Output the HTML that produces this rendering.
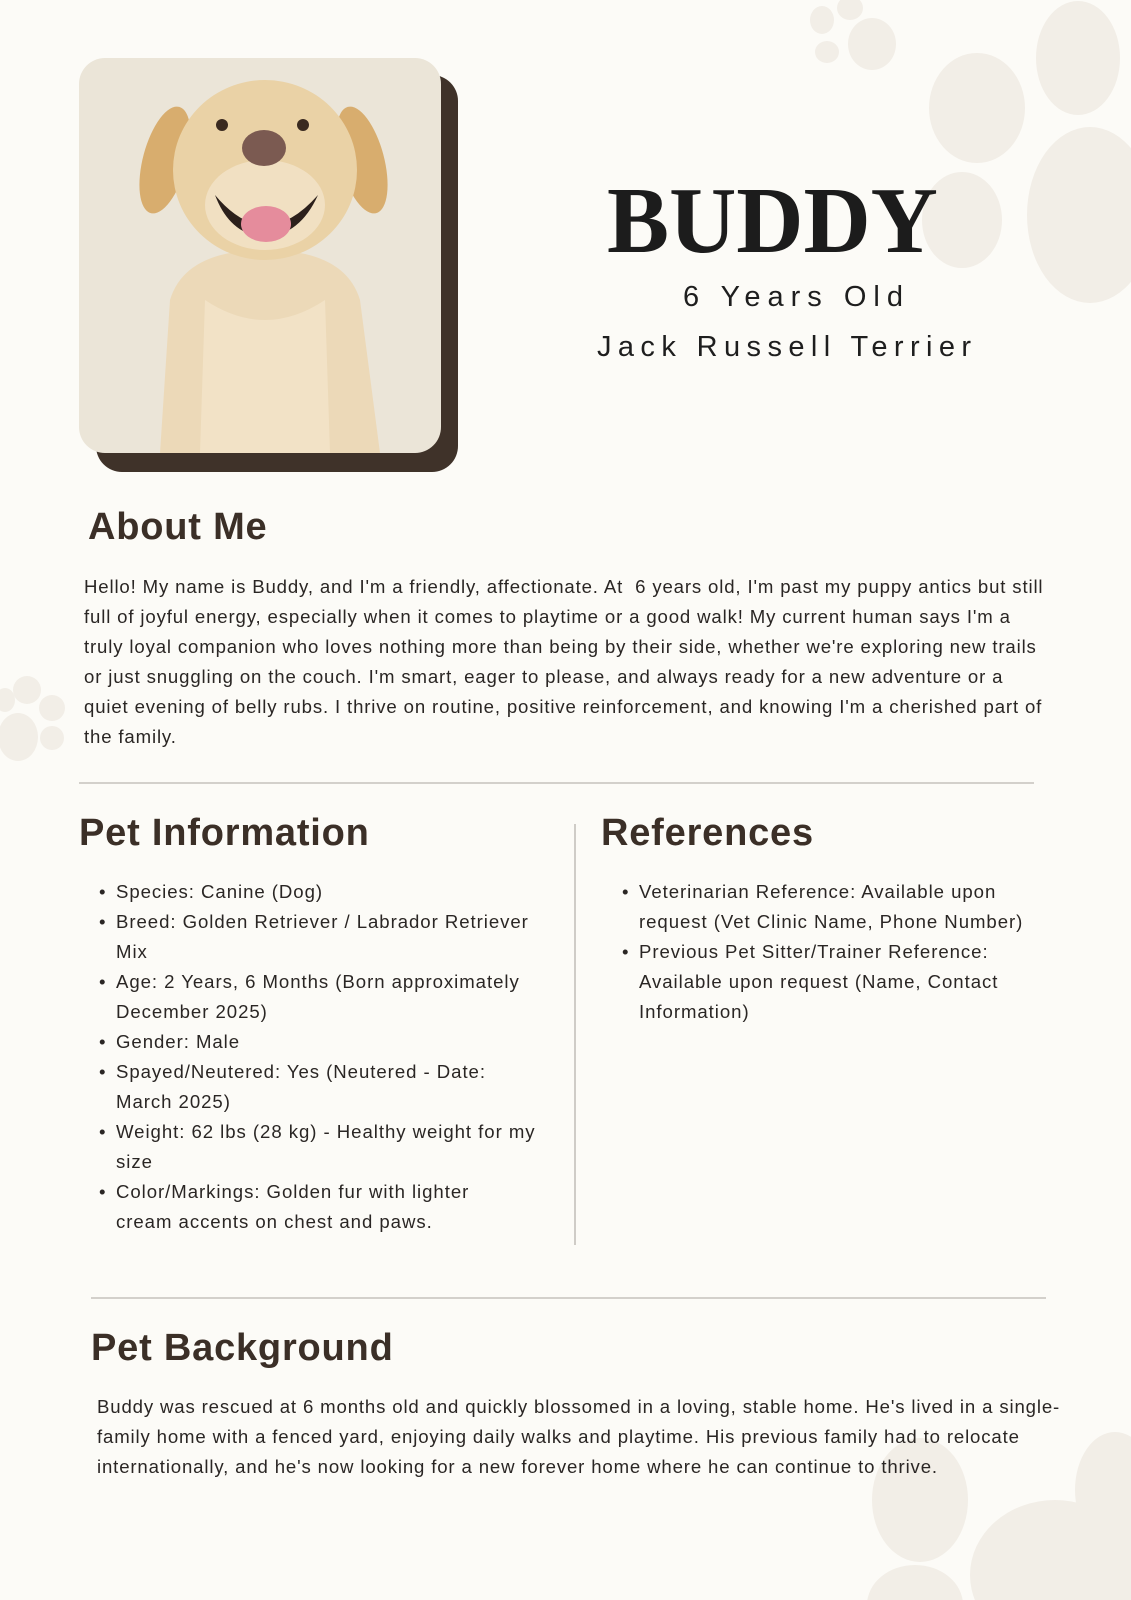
<!DOCTYPE html>
<html><head><meta charset="utf-8"><style>
html,body{margin:0;padding:0}
body{width:1131px;height:1600px;position:relative;overflow:hidden;background:#fcfbf7;font-family:"Liberation Sans",sans-serif}
.a{position:absolute;white-space:nowrap}
.h{font-weight:bold;font-size:38px;line-height:37px;color:#3b2f27;letter-spacing:0.8px}
.p{font-size:18.6px;line-height:30px;color:#2a2624;letter-spacing:0.85px}
.l{letter-spacing:0.95px}
.bul{position:absolute;left:-17px}
</style></head><body>
<svg class="a" style="left:0;top:0" width="1131" height="1600">
<g fill="#f2eee7">
<ellipse cx="822" cy="20" rx="12" ry="14"/><ellipse cx="850" cy="8" rx="13" ry="12"/>
<ellipse cx="827" cy="52" rx="12" ry="11"/><ellipse cx="872" cy="44" rx="24" ry="26"/>
<ellipse cx="1078" cy="58" rx="42" ry="57"/><ellipse cx="977" cy="108" rx="48" ry="55"/>
<ellipse cx="1090" cy="215" rx="63" ry="88"/><ellipse cx="962" cy="220" rx="40" ry="48"/>
<ellipse cx="27" cy="690" rx="14" ry="14"/><ellipse cx="52" cy="708" rx="13" ry="13"/>
<ellipse cx="18" cy="737" rx="20" ry="24"/><ellipse cx="52" cy="738" rx="12" ry="12"/><ellipse cx="5" cy="700" rx="10" ry="12"/>
<ellipse cx="920" cy="1500" rx="48" ry="62"/><ellipse cx="1115" cy="1490" rx="40" ry="58"/>
<ellipse cx="1055" cy="1575" rx="85" ry="75"/><ellipse cx="915" cy="1605" rx="48" ry="40"/>
</g>
<rect x="96" y="75" width="362" height="397" rx="26" fill="#3f3229"/>
<rect x="79" y="58" width="362" height="395" rx="26" fill="#ebe5d8"/>
<clipPath id="c"><rect x="79" y="58" width="362" height="395" rx="26"/></clipPath>
<g clip-path="url(#c)">
<path d="M160 453 L170 300 Q185 250 265 250 Q345 250 360 300 L380 453 Z" fill="#ecd9b8"/>
<path d="M205 300 Q265 340 325 300 L330 453 L200 453 Z" fill="#f2e2c6"/>
<ellipse cx="165" cy="160" rx="22" ry="55" fill="#d8ad6e" transform="rotate(15 165 160)"/>
<ellipse cx="362" cy="160" rx="22" ry="55" fill="#d8ad6e" transform="rotate(-15 362 160)"/>
<ellipse cx="265" cy="170" rx="92" ry="90" fill="#ead2a6"/>
<ellipse cx="265" cy="205" rx="60" ry="45" fill="#f1e0c2"/>
<circle cx="222" cy="125" r="6" fill="#3a2a20"/><circle cx="303" cy="125" r="6" fill="#3a2a20"/>
<ellipse cx="264" cy="148" rx="22" ry="18" fill="#7b5a51"/>
<path d="M215 195 Q265 255 318 195 Q300 235 265 237 Q230 235 215 195Z" fill="#2c201b"/>
<ellipse cx="266" cy="224" rx="25" ry="18" fill="#e58c9c"/>
</g>
</svg>
<div class="a" style="left:607px;top:174px;font-family:'Liberation Serif',serif;font-weight:bold;font-size:94px;line-height:94px;color:#1c1c1c;transform:scaleX(0.99);transform-origin:left top">BUDDY</div>
<div class="a" style="left:683px;top:280px;font-size:29px;line-height:34px;letter-spacing:7px;color:#1e1e1e">6 Years Old</div>
<div class="a" style="left:597px;top:330px;font-size:29px;line-height:34px;letter-spacing:6.4px;color:#1e1e1e">Jack Russell Terrier</div>

<div class="a h" style="left:88px;top:509px">About Me</div>
<div class="a p" style="left:84px;top:572px">Hello! My name is Buddy, and I'm a friendly, affectionate. At &nbsp;6 years old, I'm past my puppy antics but still<br>full of joyful energy, especially when it comes to playtime or a good walk! My current human says I'm a<br>truly loyal companion who loves nothing more than being by their side, whether we're exploring new trails<br>or just snuggling on the couch. I'm smart, eager to please, and always ready for a new adventure or a<br>quiet evening of belly rubs. I thrive on routine, positive reinforcement, and knowing I'm a cherished part of<br>the family.</div>
<div class="a" style="left:79px;top:782px;width:955px;height:2px;background:#d3d0cb"></div>

<div class="a h" style="left:79px;top:815px">Pet Information</div>
<div class="a" style="left:574px;top:824px;width:2px;height:421px;background:#cfccc7"></div>
<div class="a h" style="left:601px;top:815px">References</div>
<div class="a p l" style="left:116px;top:877px">
<span class="bul">•</span>Species: Canine (Dog)<br>
<span class="bul" style="top:30px">•</span>Breed: Golden Retriever / Labrador Retriever<br>Mix<br>
<span class="bul" style="top:90px">•</span>Age: 2 Years, 6 Months (Born approximately<br>December 2025)<br>
<span class="bul" style="top:150px">•</span>Gender: Male<br>
<span class="bul" style="top:180px">•</span>Spayed/Neutered: Yes (Neutered - Date:<br>March 2025)<br>
<span class="bul" style="top:240px">•</span>Weight: 62 lbs (28 kg) - Healthy weight for my<br>size<br>
<span class="bul" style="top:300px">•</span>Color/Markings: Golden fur with lighter<br>cream accents on chest and paws.</div>
<div class="a p l" style="left:639px;top:877px">
<span class="bul">•</span>Veterinarian Reference: Available upon<br>request (Vet Clinic Name, Phone Number)<br>
<span class="bul" style="top:60px">•</span>Previous Pet Sitter/Trainer Reference:<br>Available upon request (Name, Contact<br>Information)</div>

<div class="a" style="left:91px;top:1297px;width:955px;height:2px;background:#d3d0cb"></div>
<div class="a h" style="left:91px;top:1330px">Pet Background</div>
<div class="a p" style="left:97px;top:1392px">Buddy was rescued at 6 months old and quickly blossomed in a loving, stable home. He's lived in a single-<br>family home with a fenced yard, enjoying daily walks and playtime. His previous family had to relocate<br>internationally, and he's now looking for a new forever home where he can continue to thrive.</div>
</body></html>
